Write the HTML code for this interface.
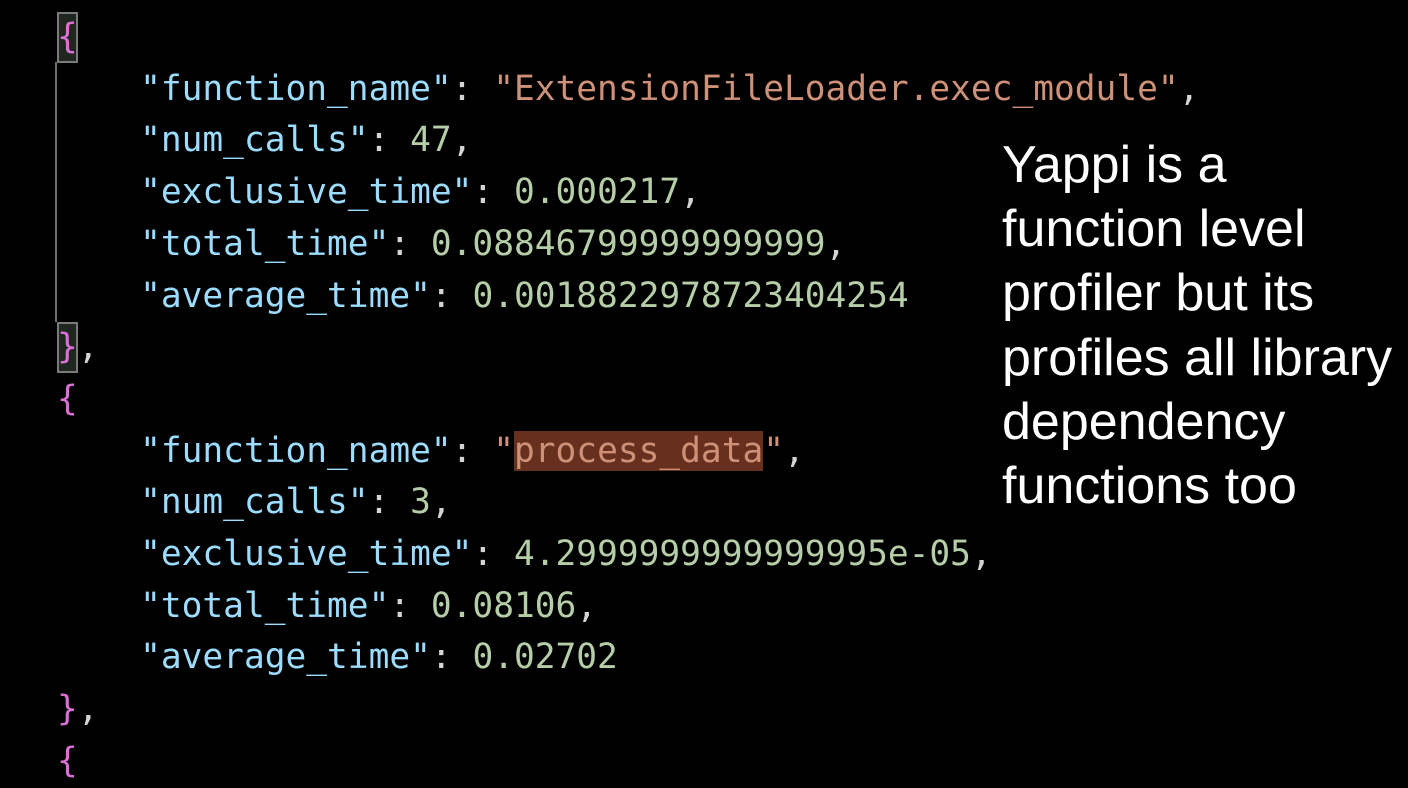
<!DOCTYPE html>
<html><head><style>
html,body{margin:0;padding:0;background:#000;width:1408px;height:754px;overflow:hidden}
.code{position:absolute;left:57px;top:12px;font-family:"DejaVu Sans Mono","Liberation Mono",monospace;font-size:34.5px;line-height:51.7px;color:#d4d4d4;white-space:pre}
.k{color:#9cdcfe}.s{color:#ce9178}.n{color:#b5cea8}.b{color:#da70d6}
.box{display:inline-block;height:51px;vertical-align:top;box-shadow:inset 0 0 0 2px #7a7a7a;background:#1f2620}
.hl{background:#672f1d}
.guide{position:absolute;left:55px;top:62px;width:2px;height:260px;background:#6e6e6e}
.note{position:absolute;left:1002px;top:133px;font-family:"Liberation Sans",Arial,sans-serif;font-size:52px;line-height:64.2px;color:#fff;white-space:nowrap}
</style></head><body>
<div class="guide"></div>
<div class="code"><span class="b box">{</span>
    <span class="k">"function_name"</span>: <span class="s">"ExtensionFileLoader.exec_module"</span>,
    <span class="k">"num_calls"</span>: <span class="n">47</span>,
    <span class="k">"exclusive_time"</span>: <span class="n">0.000217</span>,
    <span class="k">"total_time"</span>: <span class="n">0.08846799999999999</span>,
    <span class="k">"average_time"</span>: <span class="n">0.0018822978723404254</span>
<span class="b box">}</span>,
<span class="b">{</span>
    <span class="k">"function_name"</span>: <span class="s">"<span class="hl">process_data</span>"</span>,
    <span class="k">"num_calls"</span>: <span class="n">3</span>,
    <span class="k">"exclusive_time"</span>: <span class="n">4.2999999999999995e-05</span>,
    <span class="k">"total_time"</span>: <span class="n">0.08106</span>,
    <span class="k">"average_time"</span>: <span class="n">0.02702</span>
<span class="b">}</span>,
<span class="b">{</span></div>
<div class="note">Yappi is a<br>function level<br>profiler but its<br>profiles all library<br>dependency<br>functions too</div>
</body></html>
